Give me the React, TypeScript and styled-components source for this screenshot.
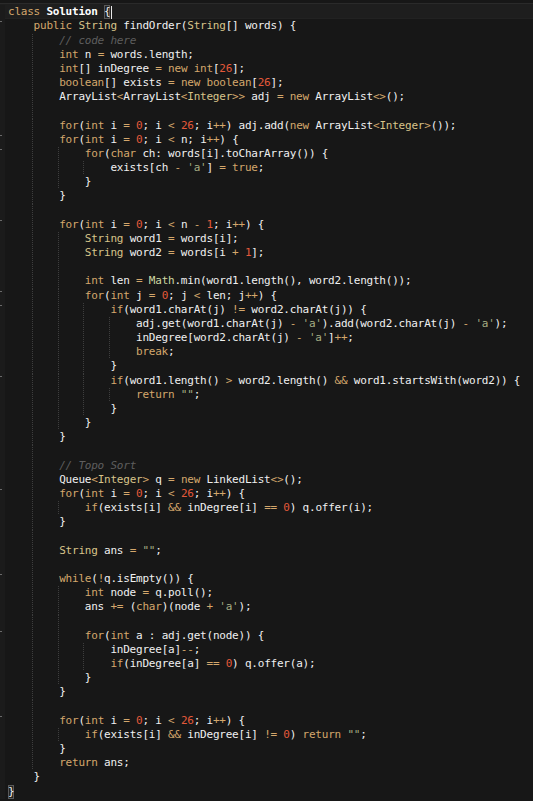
import React from "react";
import styled, { createGlobalStyle, css } from "styled-components";

const CHAR_W = 6.4;
const LINE_H = 14.18;

const GlobalStyle = createGlobalStyle`
  html, body {
    margin: 0;
    padding: 0;
    background: #171717;
    overflow: hidden;
  }
  #root {
    background: #171717;
  }
`;

const CODE: string[] = [
  "class Solution {",
  "    public String findOrder(String[] words) {",
  "        // code here",
  "        int n = words.length;",
  "        int[] inDegree = new int[26];",
  "        boolean[] exists = new boolean[26];",
  "        ArrayList<ArrayList<Integer>> adj = new ArrayList<>();",
  "",
  "        for(int i = 0; i < 26; i++) adj.add(new ArrayList<Integer>());",
  "        for(int i = 0; i < n; i++) {",
  "            for(char ch: words[i].toCharArray()) {",
  "                exists[ch - 'a'] = true;",
  "            }",
  "        }",
  "",
  "        for(int i = 0; i < n - 1; i++) {",
  "            String word1 = words[i];",
  "            String word2 = words[i + 1];",
  "",
  "            int len = Math.min(word1.length(), word2.length());",
  "            for(int j = 0; j < len; j++) {",
  "                if(word1.charAt(j) != word2.charAt(j)) {",
  "                    adj.get(word1.charAt(j) - 'a').add(word2.charAt(j) - 'a');",
  "                    inDegree[word2.charAt(j) - 'a']++;",
  "                    break;",
  "                }",
  "                if(word1.length() > word2.length() && word1.startsWith(word2)) {",
  "                    return \"\";",
  "                }",
  "            }",
  "        }",
  "",
  "        // Topo Sort",
  "        Queue<Integer> q = new LinkedList<>();",
  "        for(int i = 0; i < 26; i++) {",
  "            if(exists[i] && inDegree[i] == 0) q.offer(i);",
  "        }",
  "",
  "        String ans = \"\";",
  "",
  "        while(!q.isEmpty()) {",
  "            int node = q.poll();",
  "            ans += (char)(node + 'a');",
  "",
  "            for(int a : adj.get(node)) {",
  "                inDegree[a]--;",
  "                if(inDegree[a] == 0) q.offer(a);",
  "            }",
  "        }",
  "",
  "        for(int i = 0; i < 26; i++) {",
  "            if(exists[i] && inDegree[i] != 0) return \"\";",
  "        }",
  "        return ans;",
  "    }",
  "}",
];

// [opener line, closer line, column] (1-indexed lines)
const BLOCKS: [number, number, number][] = [
  [2, 55, 4],
  [10, 14, 8],
  [11, 13, 12],
  [16, 31, 8],
  [21, 30, 12],
  [22, 26, 16],
  [27, 29, 16],
  [35, 37, 8],
  [41, 49, 8],
  [45, 48, 12],
  [51, 53, 8],
];

const MARKERS = new Set([2, 10, 11, 16, 21, 22, 27, 35, 41, 45, 51]);

const KEYWORDS = new Set([
  "class", "public", "int", "new", "boolean", "for", "char", "true", "false",
  "if", "return", "break", "while", "else", "void", "static", "private",
]);
const TYPES = new Set(["String", "Integer"]);

type Kind =
  | "kw" | "type" | "num" | "str" | "comment" | "op" | "ident" | "punct"
  | "math" | "bold" | "space";

interface Tok {
  text: string;
  kind: Kind;
}

function tokenize(line: string): Tok[] {
  const re =
    /(\/\/.*$)|("[^"]*"|'[^']*')|(\b\d+\b)|([A-Za-z_]\w*)|(\+\+|--|&&|\|\||==|!=|\+=|-=|<=|>=|[=<>+\-!*\/%])|(\s+)|(.)/g;
  const out: Tok[] = [];
  let m: RegExpExecArray | null;
  while ((m = re.exec(line)) !== null) {
    if (m[0] === "") break;
    if (m[1]) out.push({ text: m[1], kind: "comment" });
    else if (m[2]) out.push({ text: m[2], kind: "str" });
    else if (m[3]) out.push({ text: m[3], kind: "num" });
    else if (m[4]) {
      const w = m[4];
      let kind: Kind = "ident";
      if (KEYWORDS.has(w)) kind = "kw";
      else if (TYPES.has(w)) kind = "type";
      else if (w === "Math") kind = "math";
      else if (w === "Solution") kind = "bold";
      out.push({ text: w, kind });
    } else if (m[5]) out.push({ text: m[5], kind: "op" });
    else if (m[6]) out.push({ text: m[6], kind: "space" });
    else out.push({ text: m[7], kind: "punct" });
  }
  return out;
}

const COLORS: Record<Kind, string> = {
  kw: "#d4a76c",
  type: "#d8c48a",
  num: "#e4593a",
  str: "#a6ae84",
  comment: "#5e5e5e",
  op: "#d4a76c",
  ident: "#f0f0f0",
  punct: "#f0f0f0",
  math: "#cdd8a2",
  bold: "#ffffff",
  space: "inherit",
};

const Editor = styled.div`
  display: flex;
  flex-direction: column;
  padding-top: 5.2px;
  width: 533px;
  height: 801px;
  box-sizing: border-box;
  background: #171717;
  font-family: "DejaVu Sans Mono", "Liberation Mono", monospace;
  font-size: 11px;
  letter-spacing: -0.222px;
  color: #f0f0f0;
`;

const Row = styled.div<{ $current?: boolean }>`
  display: flex;
  height: ${LINE_H}px;
  line-height: ${LINE_H}px;
  ${(p) =>
    p.$current &&
    css`
      margin-top: -2px;
      padding-top: 2px;
      background: #1e1e1e;
      box-shadow: inset 0 1px 0 #2a2a2a, inset 0 -1px 0 #222222;
    `}
`;

const Gutter = styled.div`
  width: 5px;
  flex: none;
  background: #1b1b1b;
  display: flex;
  flex-direction: column;
  padding-top: 2px;
  box-sizing: border-box;
`;

const FoldMark = styled.span`
  display: block;
  width: 2px;
  height: 1px;
  background: #6a6a6a;
`;

const guideCss = (cols: number[]) => {
  if (!cols.length) return "";
  const imgs = cols
    .map(() => "linear-gradient(to bottom, #3e3e3e 50%, transparent 50%)")
    .join(", ");
  const pos = cols.map((c) => `${(c * CHAR_W - 1.5).toFixed(2)}px 0`).join(", ");
  return css`
    background-image: ${imgs};
    background-position: ${pos};
    background-size: 1px 2px;
    background-repeat: repeat-y;
  `;
};

const Code = styled.div<{ $guides: number[] }>`
  flex: 1;
  padding-left: 3px;
  white-space: pre;
  background-origin: content-box;
  ${(p) => guideCss(p.$guides)}
`;

const Token = styled.span<{ $kind: Kind }>`
  color: ${(p) => COLORS[p.$kind]};
  font-style: ${(p) => (p.$kind === "comment" ? "italic" : "normal")};
  font-weight: ${(p) => (p.$kind === "bold" ? "bold" : "normal")};
`;

const BracketMatch = styled.span`
  color: #f0f0f0;
  box-shadow: inset 0 0 0 1px #5a5a5a;
  background: #242424;
  display: inline-block;
  height: ${LINE_H}px;
`;

const Caret = styled.span`
  display: inline-block;
  width: 1px;
  height: 13px;
  margin-left: 1px;
  vertical-align: middle;
  background: #e8e8e8;
`;

function guidesFor(lineNo: number): number[] {
  return BLOCKS.filter(([o, c]) => lineNo > o && lineNo < c).map(([, , col]) => col);
}

function renderLine(text: string, idx: number) {
  const lineNo = idx + 1;
  const toks = tokenize(text);
  const last = CODE.length;
  const parts: React.ReactNode[] = toks.map((t, i) => {
    const isMatchOpen = lineNo === 1 && t.text === "{";
    const isMatchClose = lineNo === last && t.text === "}";
    if (isMatchOpen || isMatchClose) {
      return <BracketMatch key={i}>{t.text}</BracketMatch>;
    }
    return (
      <Token key={i} $kind={t.kind}>
        {t.text}
      </Token>
    );
  });
  if (lineNo === 1) parts.push(<Caret key="caret" />);
  return parts;
}

export default function App() {
  return (
    <>
      <GlobalStyle />
      <Editor>
        {CODE.map((line, i) => (
          <Row key={i} $current={i === 0}>
            <Gutter>{MARKERS.has(i + 1) && <FoldMark />}</Gutter>
            <Code $guides={guidesFor(i + 1)}>{renderLine(line, i)}</Code>
          </Row>
        ))}
      </Editor>
    </>
  );
}
